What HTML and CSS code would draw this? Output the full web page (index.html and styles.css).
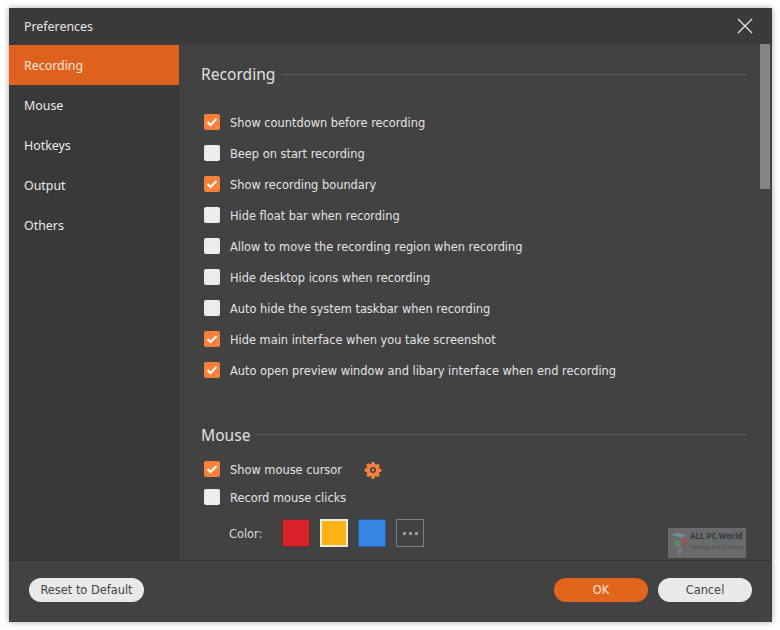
FILE: index.html
```html
<!DOCTYPE html>
<html lang="en">
<head>
<meta charset="utf-8">
<title>Preferences</title>
<link rel="stylesheet" href="styles.css">
</head>
<body>
<div class="window">
  <header class="titlebar">
    <span class="title">Preferences</span>
    <svg class="close" width="16" height="16" viewBox="0 0 16 16"><path d="M1 1L15 15M15 1L1 15" stroke="#e8e8e8" stroke-width="1.2" fill="none"/></svg>
  </header>
  <div class="main">
    <nav class="sidebar">
      <div class="nav-item active">Recording</div>
      <div class="nav-item">Mouse</div>
      <div class="nav-item">Hotkeys</div>
      <div class="nav-item">Output</div>
      <div class="nav-item">Others</div>
    </nav>
    <section class="content">
      <div class="section-head"><h2>Recording</h2><span class="rule"></span></div>
      <div class="options">
        <label class="row"><span class="box on"><svg width="12" height="10" viewBox="0 0 12 10"><path d="M1.5 5L4.5 8L10.5 2" stroke="#fff" stroke-width="2" fill="none"/></svg></span>Show countdown before recording</label>
        <label class="row"><span class="box"></span>Beep on start recording</label>
        <label class="row"><span class="box on"><svg width="12" height="10" viewBox="0 0 12 10"><path d="M1.5 5L4.5 8L10.5 2" stroke="#fff" stroke-width="2" fill="none"/></svg></span>Show recording boundary</label>
        <label class="row"><span class="box"></span>Hide float bar when recording</label>
        <label class="row"><span class="box"></span>Allow to move the recording region when recording</label>
        <label class="row"><span class="box"></span>Hide desktop icons when recording</label>
        <label class="row"><span class="box"></span>Auto hide the system taskbar when recording</label>
        <label class="row"><span class="box on"><svg width="12" height="10" viewBox="0 0 12 10"><path d="M1.5 5L4.5 8L10.5 2" stroke="#fff" stroke-width="2" fill="none"/></svg></span>Hide main interface when you take screenshot</label>
        <label class="row"><span class="box on"><svg width="12" height="10" viewBox="0 0 12 10"><path d="M1.5 5L4.5 8L10.5 2" stroke="#fff" stroke-width="2" fill="none"/></svg></span>Auto open preview window and libary interface when end recording</label>
      </div>
      <div class="section-head mouse-head"><h2>Mouse</h2><span class="rule"></span></div>
      <div class="mouse-options">
        <label class="row tight"><span class="box on"><svg width="12" height="10" viewBox="0 0 12 10"><path d="M1.5 5L4.5 8L10.5 2" stroke="#fff" stroke-width="2" fill="none"/></svg></span>Show mouse cursor
          <svg class="gear" width="18" height="18" viewBox="0 0 18 18"><path fill="#f5813c" fill-rule="evenodd" d="M7.6 1h2.8l.4 2.1 1.3.6 1.8-1.2 2 2-1.2 1.8.6 1.3 2.1.4v2.8l-2.1.4-.6 1.3 1.2 1.8-2 2-1.8-1.2-1.3.6-.4 2.1H7.6l-.4-2.1-1.3-.6-1.8 1.2-2-2 1.2-1.8-.6-1.3L.6 10.4V7.6l2.1-.4.6-1.3-1.2-1.8 2-2 1.8 1.2 1.3-.6zM9 6a3 3 0 1 0 0 6 3 3 0 0 0 0-6zm0 1.6a1.4 1.4 0 1 1 0 2.8 1.4 1.4 0 0 1 0-2.8z"/></svg>
        </label>
        <label class="row tight"><span class="box"></span>Record mouse clicks</label>
        <div class="colors">
          <span class="color-label">Color:</span>
          <span class="swatch red"></span>
          <span class="swatch amber"></span>
          <span class="swatch blue"></span>
          <span class="swatch more"><i></i><i></i><i></i></span>
        </div>
      </div>
      <div class="scrollbar"></div>
      <div class="watermark">
        <svg width="17" height="22" viewBox="0 0 20 26"><path d="M0 3L9 1L19 4L12 7Z" fill="#6f8ea0"/><path d="M12 7L19 4V14L12 18Z" fill="#8e5a5e"/><path d="M4 8L11 11V19L4 15Z" fill="#5f8a66"/><path d="M8 20L14 19L11 26L8 25Z" fill="#807a7a"/></svg>
        <div class="wm-text"><b>ALL PC World</b><small>Free Apps One Click Away</small></div>
      </div>
    </section>
  </div>
  <footer class="footer">
    <button class="btn light reset">Reset to Default</button>
    <div class="actions">
      <button class="btn orange">OK</button>
      <button class="btn light cancel">Cancel</button>
    </div>
  </footer>
</div>
</body>
</html>
```
FILE: styles.css
```css
* { box-sizing: border-box; }
html, body { margin: 0; padding: 0; background: #fff; }
body { padding: 8px 8px 8px 9px; font-family: "DejaVu Sans", sans-serif; }
.window {
  width: 763px; height: 614px;
  display: flex; flex-direction: column;
  background: #424242;
  box-shadow: 0 0 6px rgba(0,0,0,.35);
  color: #e6e6e6;
}
.titlebar {
  height: 36px; flex: none;
  display: flex; align-items: center; justify-content: space-between;
  padding: 0 19px 0 15px;
  background: #3a3a3a;
}
.title { font: 12.4px "Noto Sans", sans-serif; }
.main { flex: 1; display: flex; min-height: 0; }
.sidebar { width: 170px; flex: none; background: #393939; padding-top: 1px; }
.nav-item {
  height: 40px; padding-left: 15px;
  display: flex; align-items: center;
  font: 12.4px "Noto Sans", sans-serif;
  color: #ebebeb;
}
.nav-item.active { background: #de621e; color: #f6e6da; }
.content { position: relative; flex: 1; overflow: hidden; padding: 18px 25px 0 22px; }
.section-head { display: flex; align-items: center; gap: 6px; height: 24px; }
.section-head h2 { margin: 0; font: 400 15.6px "Noto Sans", sans-serif; color: #e0e0e0; }
.rule { flex: 1; height: 1px; background: #5c5c5c; }
.options { margin-top: 25px; display: flex; flex-direction: column; gap: 7px; }
.row {
  height: 24px; display: flex; align-items: center;
  padding-left: 3px;
  font: 11.4px "DejaVu Sans", sans-serif; color: #e3e3e3;
  white-space: nowrap;
}
.box {
  width: 16px; height: 16px; margin: -2px 10px 0 0; flex: none;
  background: #ececec; border-radius: 2px;
  display: flex; align-items: center; justify-content: center;
}
.box.on { background: #f5813c; }
.mouse-head { margin-top: 39px; }
.mouse-head h2 { padding-top: 2px; }
.mouse-options { margin-top: 12px; display: flex; flex-direction: column; gap: 4px; }
.gear { margin-left: 22px; }
.colors { display: flex; align-items: center; margin-top: 5px; padding-left: 28px; }
.color-label { font: 11.4px "DejaVu Sans", sans-serif; width: 53px; padding-top: 2px; color: #dcdcdc; }
.swatch { width: 28px; height: 28px; margin-right: 10px; flex: none; }
.red { background: #da2229; border: 1px solid #6e2a2c; }
.amber { background: #fdb315; border: 2px solid #f0ead8; }
.blue { background: #3586e4; border: 1px solid #2a5a94; }
.more { border: 1px solid #808080; display: flex; align-items: center; justify-content: center; gap: 3px; }
.more i { width: 3px; height: 3px; background: #999; }
.scrollbar { position: absolute; top: 0; right: 2px; width: 10px; height: 145px; background: #858585; }
.watermark {
  position: absolute; left: 489px; top: 484px; width: 78px; height: 30px;
  background: #6a6a6a; display: flex; align-items: center; gap: 2px; padding-left: 3px;
}
.wm-text { display: flex; flex-direction: column; padding-bottom: 6px; color: #2f3a42; line-height: 1; }
.wm-text b { font: 700 8px "Noto Sans", sans-serif; white-space: nowrap; }
.wm-text small { font: 4.4px "Noto Sans", sans-serif; margin-top: 3px; color: #454b50; white-space: nowrap; }
.footer {
  height: 62px; flex: none;
  display: flex; align-items: center; justify-content: space-between;
  padding: 0 20px 4px 20px;
  border-top: 1px solid #333;
}
.actions { display: flex; gap: 10px; }
.btn {
  height: 24px; border: 0; border-radius: 12px; padding: 1px 0 0;
  font: 11.4px "DejaVu Sans", sans-serif;
}
.light { background: #e9e9e9; color: #444; }
.orange { background: #e2641d; color: #f8e8dc; width: 94px; }
.reset { width: 115px; }
.cancel { width: 94px; }
```
